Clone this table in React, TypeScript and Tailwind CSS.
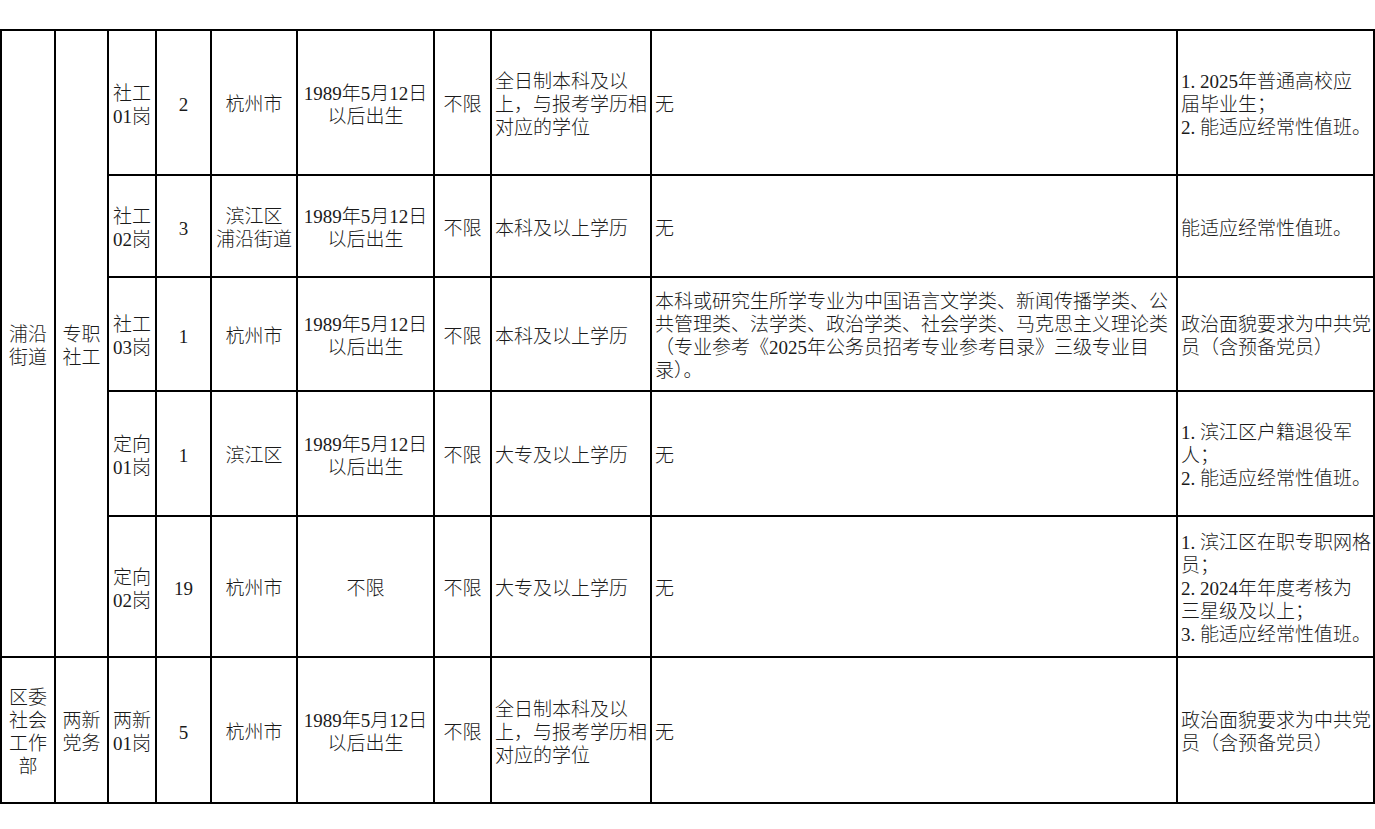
import React from 'react';

type Row = {
  post: string[];
  count: string;
  place: string[];
  birth: string[];
  gender: string;
  edu: string[];
  major: string[];
  other: string[];
};

const birth = ['1989年5月12日', '以后出生'];
const fullTime = ['全日制本科及以', '上，与报考学历相', '对应的学位'];

// 浦沿街道 专职社工
const puyanRows: Row[] = [
  {
    post: ['社工', '01岗'],
    count: '2',
    place: ['杭州市'],
    birth,
    gender: '不限',
    edu: fullTime,
    major: ['无'],
    other: ['1. 2025年普通高校应', '届毕业生；', '2. 能适应经常性值班。'],
  },
  {
    post: ['社工', '02岗'],
    count: '3',
    place: ['滨江区', '浦沿街道'],
    birth,
    gender: '不限',
    edu: ['本科及以上学历'],
    major: ['无'],
    other: ['能适应经常性值班。'],
  },
  {
    post: ['社工', '03岗'],
    count: '1',
    place: ['杭州市'],
    birth,
    gender: '不限',
    edu: ['本科及以上学历'],
    major: [
      '本科或研究生所学专业为中国语言文学类、新闻传播学类、公',
      '共管理类、法学类、政治学类、社会学类、马克思主义理论类',
      '（专业参考《2025年公务员招考专业参考目录》三级专业目',
      '录）。',
    ],
    other: ['政治面貌要求为中共党', '员（含预备党员）'],
  },
  {
    post: ['定向', '01岗'],
    count: '1',
    place: ['滨江区'],
    birth,
    gender: '不限',
    edu: ['大专及以上学历'],
    major: ['无'],
    other: ['1. 滨江区户籍退役军', '人；', '2. 能适应经常性值班。'],
  },
  {
    post: ['定向', '02岗'],
    count: '19',
    place: ['杭州市'],
    birth: ['不限'],
    gender: '不限',
    edu: ['大专及以上学历'],
    major: ['无'],
    other: ['1. 滨江区在职专职网格', '员；', '2. 2024年年度考核为', '三星级及以上；', '3. 能适应经常性值班。'],
  },
];

const rowHeights = ['h-[145px]', 'h-[102px]', 'h-[114px]', 'h-[125px]', 'h-[141px]'];

function Lines({ lines }: { lines: string[] }) {
  return (
    <>
      {lines.map((l, i) => (
        <div key={i}>{l}</div>
      ))}
    </>
  );
}

const td = 'border-2 border-black align-middle whitespace-nowrap px-[3px] pt-[4px] pb-0';
const center = `${td} text-center`;
const left = `${td} text-left`;

function Cells({ r }: { r: Row }) {
  return (
    <>
      <td className={center}><Lines lines={r.post} /></td>
      <td className={center}><Lines lines={[r.count]} /></td>
      <td className={center}><Lines lines={r.place} /></td>
      <td className={center}><Lines lines={r.birth} /></td>
      <td className={center}><Lines lines={[r.gender]} /></td>
      <td className={left}><Lines lines={r.edu} /></td>
      <td className={left}><Lines lines={r.major} /></td>
      <td className={left}><Lines lines={r.other} /></td>
    </>
  );
}

export default function App() {
  const lastRow: Row = {
    post: ['两新', '01岗'],
    count: '5',
    place: ['杭州市'],
    birth,
    gender: '不限',
    edu: fullTime,
    major: ['无'],
    other: ['政治面貌要求为中共党', '员（含预备党员）'],
  };

  return (
    <div className="w-[1375px] h-[829px] bg-white overflow-hidden pt-[29px] text-[19px] leading-[23px] font-light text-[#1a1a1a] font-['Liberation_Serif','Noto_Sans_CJK_SC',serif]">
      <table className="border-collapse table-fixed w-[1375px]">
        <colgroup>
          <col className="w-[54px]" />
          <col className="w-[53px]" />
          <col className="w-[48px]" />
          <col className="w-[55px]" />
          <col className="w-[86px]" />
          <col className="w-[137px]" />
          <col className="w-[57px]" />
          <col className="w-[160px]" />
          <col className="w-[526px]" />
          <col className="w-[197px]" />
        </colgroup>
        <tbody>
          {puyanRows.map((r, i) => (
            <tr key={i} className={rowHeights[i]}>
              {i === 0 && (
                <>
                  <td rowSpan={5} className={center}><Lines lines={['浦沿', '街道']} /></td>
                  <td rowSpan={5} className={center}><Lines lines={['专职', '社工']} /></td>
                </>
              )}
              <Cells r={r} />
            </tr>
          ))}
          <tr className="h-[146px]">
            <td className={center}><Lines lines={['区委', '社会', '工作', '部']} /></td>
            <td className={center}><Lines lines={['两新', '党务']} /></td>
            <Cells r={lastRow} />
          </tr>
        </tbody>
      </table>
    </div>
  );
}
